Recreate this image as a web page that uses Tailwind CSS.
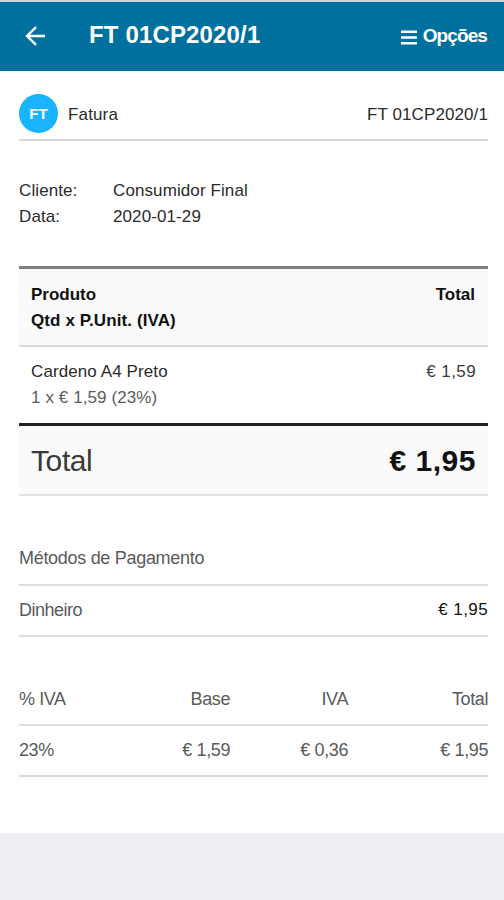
<!DOCTYPE html>
<html lang="pt">
<head>
<meta charset="utf-8">
<title>FT 01CP2020/1</title>
<script src="https://cdn.jsdelivr.net/npm/@tailwindcss/browser@4"></script>
</head>
<body class="w-[504px] h-[900px] overflow-hidden bg-[#eeeef3] font-['Liberation_Sans',Arial,sans-serif] text-[17px] leading-[26px] text-[#2b2b2b] whitespace-nowrap">
<header class="h-[71px] border-t-2 border-[#cbd9df] bg-[#00719f] text-white flex items-center pl-[25px] pr-[17px]">
  <svg class="w-5 h-5 -mt-px" viewBox="0 0 20 20" fill="none" stroke="currentColor" stroke-width="2.4"><path d="M20 10H2.2M11 1.2L2 10l9 8.8"/></svg>
  <h1 class="ml-[44px] -mt-[3px] text-[24px] font-bold tracking-[0.15px]">FT 01CP2020/1</h1>
  <div class="ml-auto -mt-px flex items-center">
    <svg class="w-4 h-[15px] mr-[6px] mt-[2px]" viewBox="0 0 16 15" fill="currentColor"><path d="M0 0.4h16v2.6H0zM0 6.2h16v2.6H0zM0 12h16v2.6H0z"/></svg>
    <span class="text-[19px] font-bold tracking-[-0.9px]">Opções</span>
  </div>
</header>
<main class="h-[762px] bg-white pl-[19px] pt-[23px] pr-4">
  <section class="h-[47px] w-[469px] border-b-2 border-[#d8d8d8] flex items-start">
    <div class="w-[39px] h-[39px] rounded-full bg-[#18b4fe] text-white font-bold text-[15px] flex items-center justify-center">FT</div>
    <span class="ml-[10px] mt-[8px] tracking-[0.15px]">Fatura</span>
    <span class="ml-auto mt-[8px] tracking-[0.1px]">FT 01CP2020/1</span>
  </section>
  <dl class="mt-[37px] grid grid-cols-[94px_1fr] tracking-[0.1px]">
    <dt>Cliente:</dt><dd>Consumidor Final</dd>
    <dt>Data:</dt><dd>2020-01-29</dd>
  </dl>
  <section class="mt-[36px] w-[469px]">
    <div class="h-[81px] border-t-3 border-t-[#808080] border-b-2 border-b-[#dadada] bg-[#fafafa] px-[12px] pt-[13px] flex justify-between font-bold text-[#111] text-[17px]">
      <div>Produto<br><span class="tracking-[0.1px]">Qtd x P.Unit. (IVA)</span></div><div class="pr-px">Total</div>
    </div>
    <div class="h-[76px] px-[12px] pt-[12px] flex justify-between">
      <div><span class="tracking-[0.1px]">Cardeno A4 Preto</span><br><span class="text-[#5c5c5c] tracking-[0.1px]">1 x € 1,59 (23%)</span></div><div class="text-[#3c3c3c] tracking-[0.4px]">€ 1,59</div>
    </div>
    <div class="h-[73px] border-t-3 border-t-[#222] border-b-2 border-b-[#e2e2e2] bg-[#fafafa] px-[12px] pt-[2px] flex justify-between items-center text-[30px]">
      <span class="text-[#3a3a3a] tracking-[-0.4px]">Total</span><span class="font-bold text-[#111] tracking-[0.5px]">€ 1,95</span>
    </div>
  </section>
  <section class="mt-[49px] w-[469px] text-[18px] text-[#5a5a5a]">
    <div class="h-[41px] border-b-2 border-[#dedede] tracking-[-0.3px]">Métodos de Pagamento</div>
    <div class="h-[51px] border-b-2 border-[#dedede] pt-[11px] flex justify-between"><span class="tracking-[-0.5px]">Dinheiro</span><span class="text-[17px] text-[#111] tracking-[0.4px]">€ 1,95</span></div>
  </section>
  <section class="mt-[49px] w-[469px] text-[18px] text-[#5a5a5a] tracking-[-0.4px]">
    <div class="h-[40px] border-b-2 border-[#dedede] grid grid-cols-[93px_118px_118px_140px] text-right"><span class="text-left">% IVA</span><span>Base</span><span>IVA</span><span>Total</span></div>
    <div class="h-[51px] border-b-2 border-[#d8d8d8] pt-[11px] grid grid-cols-[93px_118px_118px_140px] text-right"><span class="text-left">23%</span><span>€ 1,59</span><span>€ 0,36</span><span>€ 1,95</span></div>
  </section>
</main>
</body>
</html>
